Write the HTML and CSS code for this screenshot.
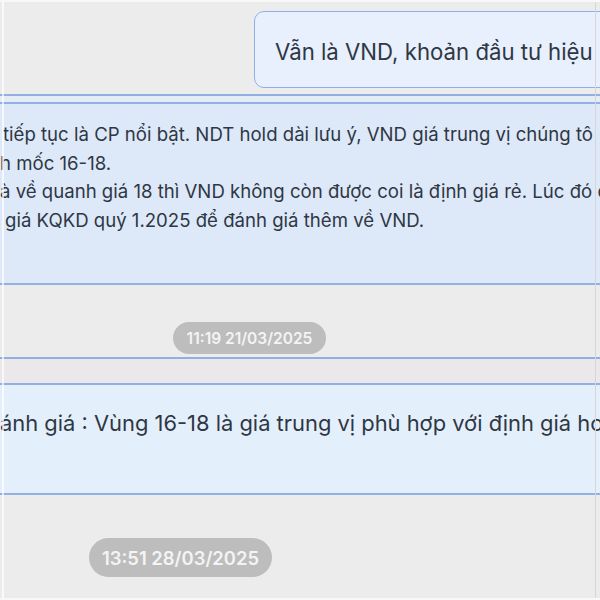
FILE: index.html
```html
<!DOCTYPE html>
<html lang="vi">
<head>
<meta charset="utf-8">
<link rel="stylesheet" href="styles.css">
</head>
<body>
<div class="page">
  <div class="row-out">
    <div class="bubble bubble-out">
      <p class="out-text">Vẫn là VND, khoản đầu tư hiệu</p>
    </div>
  </div>

  <div class="msg-in">
    <div class="strip strip-blue"></div>
    <div class="bubble bubble-in">
      <div class="line l1">tiếp tục là CP nổi bật. NDT hold dài lưu ý, VND giá trung vị chúng tô</div>
      <div class="line l2">h mốc 16-18.</div>
      <div class="line l3">à về quanh giá 18 thì VND không còn được coi là định giá rẻ. Lúc đó c</div>
      <div class="line l4">giá KQKD quý 1.2025 để đánh giá thêm về VND.</div>
    </div>
  </div>

  <div class="stamp-row stamp-row-1">
    <span class="stamp stamp-1">11:19 21/03/2025</span>
  </div>

  <div class="msg-in msg-in-2">
    <div class="strip strip-pink"></div>
    <div class="bubble bubble-in bubble-in-2">
      <div class="line big">ánh giá : Vùng 16-18 là giá trung vị phù hợp với định giá ho</div>
    </div>
  </div>

  <div class="stamp-row stamp-row-2">
    <span class="stamp stamp-2">13:51 28/03/2025</span>
  </div>
</div>
</body>
</html>
```

FILE: styles.css
```css
* { box-sizing: border-box; }

html, body {
  margin: 0;
  padding: 0;
}

body {
  width: 600px;
  height: 600px;
  overflow: hidden;
  background: #ececec;
  font-family: "Inter", "Open Sans", "Noto Sans", sans-serif;
  color: #2f3744;
}

.page {
  position: relative;
  width: 600px;
  height: 600px;
  overflow: hidden;
  border-top: 2px solid #f8f8f8;
  border-bottom: 2px solid #f8f8f8;
}

.page::before {
  content: "";
  position: absolute;
  left: 2px;
  top: 0;
  bottom: 0;
  width: 2px;
  background: rgba(255, 255, 255, 0.7);
  z-index: 2;
}

.page::after {
  content: "";
  position: absolute;
  right: 4px;
  top: 0;
  bottom: 0;
  width: 1px;
  background: #d6d6d6;
  z-index: 2;
}

.row-out {
  display: flex;
  padding-top: 9px;
  padding-left: 254px;
  margin-right: -30px;
}

.bubble {
  background: #e7f0fc;
  border: 1.5px solid #91afe6;
}

.bubble-out {
  flex: 1;
  height: 77px;
  border-radius: 10px;
  display: flex;
  align-items: center;
  padding-left: 20px;
  padding-top: 3px;
  overflow: hidden;
}

.out-text {
  margin: 0;
  font-size: 22.2px;
  white-space: nowrap;
}

.msg-in {
  margin: 6px -30px 0;
}

.strip {
  height: 8px;
  border-top: 2px solid #93afe2;
}

.strip-blue {
  background: #e4ecf8;
}

.strip-pink {
  height: 26px;
  background: #ebe8eb;
}

.bubble-in {
  background: #dde9f8;
  border-width: 2px 0 2px 0;
  border-color: #93b0e4;
  height: 183px;
  padding: 16px 0 0 30px;
  overflow: hidden;
}

.line {
  font-size: 18.6px;
  line-height: 28.5px;
  white-space: nowrap;
}

.l1 { padding-left: 3px; }
.l2 { padding-left: 0; }
.l3 { padding-left: 0; }
.l4 { padding-left: 5px; }

.stamp-row {
  display: flex;
}

.stamp-row-1 {
  padding: 37px 0 0 173px;
  height: 72px;
}

.stamp {
  background: #bdbdbd;
  color: #f4f4f4;
  font-family: "Inter", "Liberation Sans", sans-serif;
  font-weight: 600;
  white-space: nowrap;
  display: flex;
  align-items: center;
  justify-content: center;
}

.stamp-1 {
  width: 153px;
  height: 32px;
  border-radius: 16px;
  font-size: 15.5px;
}

.msg-in-2 {
  margin-top: 0;
}

.bubble-in-2 {
  background: #e4effc;
  height: 112px;
  padding-top: 23px;
}

.big {
  font-size: 21.9px;
  line-height: 30px;
}

.stamp-row-2 {
  padding: 43px 0 0 89px;
}

.stamp-2 {
  width: 183px;
  height: 39px;
  border-radius: 20px;
  font-size: 18.4px;
}
```
